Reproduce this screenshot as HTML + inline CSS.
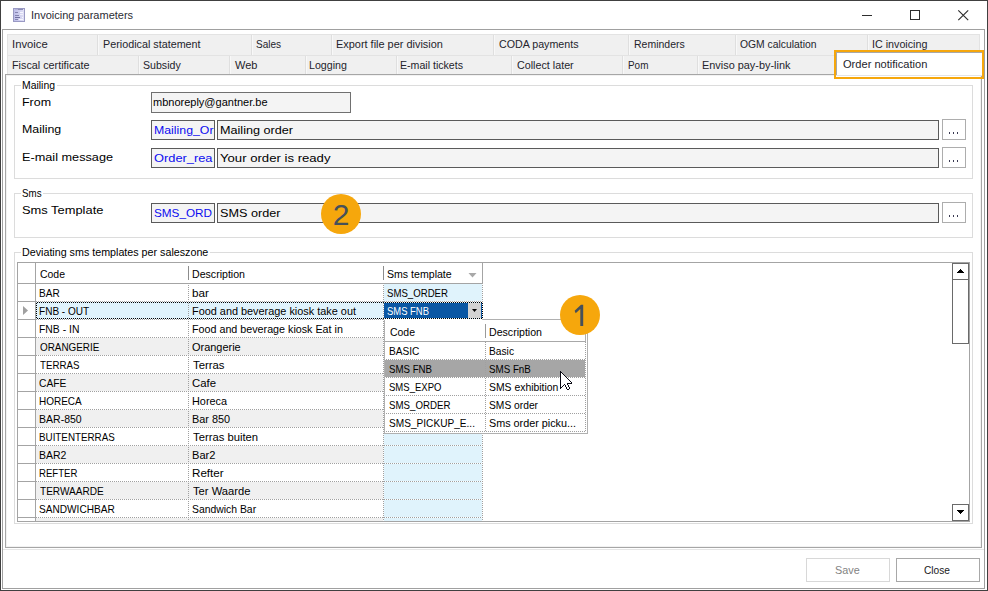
<!DOCTYPE html><html><head><meta charset="utf-8"><title>Invoicing parameters</title><style>html,body{margin:0;padding:0}body{width:988px;height:591px;position:relative;overflow:hidden;background:#fff;font-family:"Liberation Sans", sans-serif;}
div,svg,span{position:absolute;box-sizing:border-box}
span{white-space:pre;line-height:1;transform-origin:0 0}
</style></head><body>
<div style="left:0px;top:0px;width:988px;height:591px;border:1px solid #404040;"></div>
<svg style="left:13px;top:8px" width="12" height="14" viewBox="0 0 12 14"><defs><linearGradient id="ig" x1="0" x2="1" y1="0" y2="0"><stop offset="0" stop-color="#bcbce8"/><stop offset="1" stop-color="#e2e2f6"/></linearGradient></defs><rect x="0.5" y="0.5" width="11" height="13" fill="url(#ig)" stroke="#9a9ac4"/><rect x="5" y="1" width="5" height="1" fill="#8c8cb4"/><rect x="2" y="1" width="3" height="1" fill="#b4b4d8"/><rect x="2" y="4" width="3" height="1" fill="#8484b0"/><rect x="2" y="7" width="4" height="1" fill="#8484b0"/><rect x="2" y="9" width="5" height="1" fill="#7070a0"/><rect x="2" y="11" width="3" height="1" fill="#8484b0"/><rect x="7" y="4" width="3" height="1" fill="#f6f6ff"/><rect x="7" y="6" width="3" height="1" fill="#f0f0fc"/><rect x="9" y="9" width="1" height="1" fill="#f6f6ff"/><rect x="6" y="11" width="4" height="1" fill="#f6f6ff"/></svg>
<svg style="left:855px;top:5px" width="120" height="20" viewBox="0 0 120 20" fill="none" stroke="#2e2e2e" stroke-width="1"><path d="M7 10.5H17"/><rect x="55.5" y="5.5" width="9" height="9"/><path d="M103.3 5.3L113.2 15.2M113.2 5.3L103.3 15.2" stroke-width="1.15"/></svg>
<div style="left:2px;top:29px;width:983px;height:560px;border:1px solid #a0a0a0;"></div>
<div style="left:7px;top:34px;width:973px;height:21px;background:#f0f0f0;"></div>
<div style="left:7px;top:55px;width:829px;height:19px;background:#f0f0f0;"></div>
<div style="left:7px;top:34px;width:973px;height:1px;background:#e3e3e3;"></div>
<div style="left:7px;top:55px;width:973px;height:1px;background:#e3e3e3;"></div>
<div style="left:7px;top:34px;width:1px;height:40px;background:#e3e3e3;"></div>
<div style="left:979px;top:34px;width:1px;height:21px;background:#e3e3e3;"></div>
<div style="left:97px;top:35px;width:1px;height:20px;background:#dfdfdf;"></div>
<div style="left:98px;top:35px;width:1px;height:20px;background:#f8f8f8;"></div>
<div style="left:251px;top:35px;width:1px;height:20px;background:#dfdfdf;"></div>
<div style="left:252px;top:35px;width:1px;height:20px;background:#f8f8f8;"></div>
<div style="left:331px;top:35px;width:1px;height:20px;background:#dfdfdf;"></div>
<div style="left:332px;top:35px;width:1px;height:20px;background:#f8f8f8;"></div>
<div style="left:493px;top:35px;width:1px;height:20px;background:#dfdfdf;"></div>
<div style="left:494px;top:35px;width:1px;height:20px;background:#f8f8f8;"></div>
<div style="left:628px;top:35px;width:1px;height:20px;background:#dfdfdf;"></div>
<div style="left:629px;top:35px;width:1px;height:20px;background:#f8f8f8;"></div>
<div style="left:735px;top:35px;width:1px;height:20px;background:#dfdfdf;"></div>
<div style="left:736px;top:35px;width:1px;height:20px;background:#f8f8f8;"></div>
<div style="left:867px;top:35px;width:1px;height:20px;background:#dfdfdf;"></div>
<div style="left:868px;top:35px;width:1px;height:20px;background:#f8f8f8;"></div>
<div style="left:138px;top:56px;width:1px;height:18px;background:#dfdfdf;"></div>
<div style="left:139px;top:56px;width:1px;height:18px;background:#f8f8f8;"></div>
<div style="left:229px;top:56px;width:1px;height:18px;background:#dfdfdf;"></div>
<div style="left:230px;top:56px;width:1px;height:18px;background:#f8f8f8;"></div>
<div style="left:305px;top:56px;width:1px;height:18px;background:#dfdfdf;"></div>
<div style="left:306px;top:56px;width:1px;height:18px;background:#f8f8f8;"></div>
<div style="left:396px;top:56px;width:1px;height:18px;background:#dfdfdf;"></div>
<div style="left:397px;top:56px;width:1px;height:18px;background:#f8f8f8;"></div>
<div style="left:511px;top:56px;width:1px;height:18px;background:#dfdfdf;"></div>
<div style="left:512px;top:56px;width:1px;height:18px;background:#f8f8f8;"></div>
<div style="left:622px;top:56px;width:1px;height:18px;background:#dfdfdf;"></div>
<div style="left:623px;top:56px;width:1px;height:18px;background:#f8f8f8;"></div>
<div style="left:697px;top:56px;width:1px;height:18px;background:#dfdfdf;"></div>
<div style="left:698px;top:56px;width:1px;height:18px;background:#f8f8f8;"></div>
<div style="left:5px;top:74px;width:977px;height:474px;background:#fff;border:1px solid #a6a6a6;"></div>
<div style="left:6px;top:75px;width:975px;height:472px;border:1px solid #f2f2f2;"></div>
<div style="left:3px;top:549px;width:981px;height:1px;background:#e6e6e6;"></div>
<div style="left:836px;top:52px;width:146px;height:24px;background:#fff;border-left:1px solid #a8a8a8;border-top:1px solid #a8a8a8;box-sizing:border-box;"></div>
<div style="left:836px;top:75px;width:146px;height:1px;background:#e4e4e4;"></div>
<div style="left:834px;top:50px;width:150px;height:29px;border:2px solid #f6a70c;"></div>
<div style="left:14px;top:85px;width:959px;height:94px;border:1px solid #dcdcdc;"></div>
<div style="left:21px;top:85px;width:36px;height:1px;background:#fff;"></div>
<div style="left:14px;top:193px;width:959px;height:45px;border:1px solid #dcdcdc;"></div>
<div style="left:21px;top:193px;width:22px;height:1px;background:#fff;"></div>
<div style="left:14px;top:252px;width:959px;height:272px;border:1px solid #dcdcdc;"></div>
<div style="left:21px;top:252px;width:189px;height:1px;background:#fff;"></div>
<div style="left:151px;top:92px;width:200px;height:21px;background:#f4f4f4;border:1px solid #707070;"></div>
<div style="left:151px;top:120px;width:64px;height:20px;background:#f4f4f4;border:1px solid #5a5a5a;"></div>
<div style="left:217px;top:120px;width:722px;height:20px;background:#f4f4f4;border:1px solid #5a5a5a;"></div>
<div style="left:942px;top:119px;width:24px;height:21px;background:#fff;border:1px solid #adadad;"></div>
<div style="left:949px;top:132px;width:1px;height:2px;background:#3a3a52;"></div>
<div style="left:953px;top:132px;width:1px;height:2px;background:#3a3a52;"></div>
<div style="left:957px;top:132px;width:1px;height:2px;background:#3a3a52;"></div>
<div style="left:151px;top:148px;width:64px;height:20px;background:#f4f4f4;border:1px solid #5a5a5a;"></div>
<div style="left:217px;top:148px;width:722px;height:20px;background:#f4f4f4;border:1px solid #5a5a5a;"></div>
<div style="left:942px;top:147px;width:24px;height:21px;background:#fff;border:1px solid #adadad;"></div>
<div style="left:949px;top:160px;width:1px;height:2px;background:#3a3a52;"></div>
<div style="left:953px;top:160px;width:1px;height:2px;background:#3a3a52;"></div>
<div style="left:957px;top:160px;width:1px;height:2px;background:#3a3a52;"></div>
<div style="left:151px;top:203px;width:64px;height:20px;background:#f4f4f4;border:1px solid #5a5a5a;"></div>
<div style="left:217px;top:203px;width:722px;height:20px;background:#f4f4f4;border:1px solid #5a5a5a;"></div>
<div style="left:942px;top:202px;width:24px;height:21px;background:#fff;border:1px solid #adadad;"></div>
<div style="left:949px;top:215px;width:1px;height:2px;background:#3a3a52;"></div>
<div style="left:953px;top:215px;width:1px;height:2px;background:#3a3a52;"></div>
<div style="left:957px;top:215px;width:1px;height:2px;background:#3a3a52;"></div>
<div style="left:17px;top:262px;width:953px;height:260px;background:#fff;border:1px solid #a4a4a4;"></div>
<div style="left:18px;top:283px;width:465px;height:1px;background:#a4a4a4;"></div>
<div style="left:35px;top:263px;width:1px;height:259px;background:#a4a4a4;"></div>
<div style="left:482px;top:263px;width:1px;height:21px;background:#a4a4a4;"></div>
<div style="left:188px;top:266px;width:1px;height:14px;background:#8c8c8c;"></div>
<div style="left:383px;top:266px;width:1px;height:14px;background:#8c8c8c;"></div>
<svg style="left:468px;top:272px" width="9" height="6" viewBox="0 0 9 6"><path d="M0.5 1H8.5L4.5 5.5Z" fill="#a8a8a8"/></svg>
<div style="left:384px;top:284px;width:98px;height:17px;background:#e0f3fc;"></div>
<div style="left:18px;top:301px;width:17px;height:1px;background:#a4a4a4;"></div>
<div style="left:36px;top:301px;width:447px;height:1px;background:repeating-linear-gradient(90deg,#a0a0a0 0 1px,transparent 1px 2px);"></div>
<div style="left:36px;top:302px;width:347px;height:17px;background:#e0f3fc;"></div>
<div style="left:384px;top:302px;width:98px;height:17px;background:#e0f3fc;"></div>
<div style="left:18px;top:319px;width:17px;height:1px;background:#a4a4a4;"></div>
<div style="left:36px;top:319px;width:447px;height:1px;background:repeating-linear-gradient(90deg,#a0a0a0 0 1px,transparent 1px 2px);"></div>
<div style="left:384px;top:320px;width:98px;height:17px;background:#e0f3fc;"></div>
<div style="left:18px;top:337px;width:17px;height:1px;background:#a4a4a4;"></div>
<div style="left:36px;top:337px;width:447px;height:1px;background:repeating-linear-gradient(90deg,#a0a0a0 0 1px,transparent 1px 2px);"></div>
<div style="left:36px;top:338px;width:347px;height:17px;background:#f0f0f0;"></div>
<div style="left:384px;top:338px;width:98px;height:17px;background:#e0f3fc;"></div>
<div style="left:18px;top:355px;width:17px;height:1px;background:#a4a4a4;"></div>
<div style="left:36px;top:355px;width:447px;height:1px;background:repeating-linear-gradient(90deg,#a0a0a0 0 1px,transparent 1px 2px);"></div>
<div style="left:384px;top:356px;width:98px;height:17px;background:#e0f3fc;"></div>
<div style="left:18px;top:373px;width:17px;height:1px;background:#a4a4a4;"></div>
<div style="left:36px;top:373px;width:447px;height:1px;background:repeating-linear-gradient(90deg,#a0a0a0 0 1px,transparent 1px 2px);"></div>
<div style="left:36px;top:374px;width:347px;height:17px;background:#f0f0f0;"></div>
<div style="left:384px;top:374px;width:98px;height:17px;background:#e0f3fc;"></div>
<div style="left:18px;top:391px;width:17px;height:1px;background:#a4a4a4;"></div>
<div style="left:36px;top:391px;width:447px;height:1px;background:repeating-linear-gradient(90deg,#a0a0a0 0 1px,transparent 1px 2px);"></div>
<div style="left:384px;top:392px;width:98px;height:17px;background:#e0f3fc;"></div>
<div style="left:18px;top:409px;width:17px;height:1px;background:#a4a4a4;"></div>
<div style="left:36px;top:409px;width:447px;height:1px;background:repeating-linear-gradient(90deg,#a0a0a0 0 1px,transparent 1px 2px);"></div>
<div style="left:36px;top:410px;width:347px;height:17px;background:#f0f0f0;"></div>
<div style="left:384px;top:410px;width:98px;height:17px;background:#e0f3fc;"></div>
<div style="left:18px;top:427px;width:17px;height:1px;background:#a4a4a4;"></div>
<div style="left:36px;top:427px;width:447px;height:1px;background:repeating-linear-gradient(90deg,#a0a0a0 0 1px,transparent 1px 2px);"></div>
<div style="left:384px;top:428px;width:98px;height:17px;background:#e0f3fc;"></div>
<div style="left:18px;top:445px;width:17px;height:1px;background:#a4a4a4;"></div>
<div style="left:36px;top:445px;width:447px;height:1px;background:repeating-linear-gradient(90deg,#a0a0a0 0 1px,transparent 1px 2px);"></div>
<div style="left:36px;top:446px;width:347px;height:17px;background:#f0f0f0;"></div>
<div style="left:384px;top:446px;width:98px;height:17px;background:#e0f3fc;"></div>
<div style="left:18px;top:463px;width:17px;height:1px;background:#a4a4a4;"></div>
<div style="left:36px;top:463px;width:447px;height:1px;background:repeating-linear-gradient(90deg,#a0a0a0 0 1px,transparent 1px 2px);"></div>
<div style="left:384px;top:464px;width:98px;height:17px;background:#e0f3fc;"></div>
<div style="left:18px;top:481px;width:17px;height:1px;background:#a4a4a4;"></div>
<div style="left:36px;top:481px;width:447px;height:1px;background:repeating-linear-gradient(90deg,#a0a0a0 0 1px,transparent 1px 2px);"></div>
<div style="left:36px;top:482px;width:347px;height:17px;background:#f0f0f0;"></div>
<div style="left:384px;top:482px;width:98px;height:17px;background:#e0f3fc;"></div>
<div style="left:18px;top:499px;width:17px;height:1px;background:#a4a4a4;"></div>
<div style="left:36px;top:499px;width:447px;height:1px;background:repeating-linear-gradient(90deg,#a0a0a0 0 1px,transparent 1px 2px);"></div>
<div style="left:384px;top:500px;width:98px;height:17px;background:#e0f3fc;"></div>
<div style="left:18px;top:517px;width:17px;height:1px;background:#a4a4a4;"></div>
<div style="left:36px;top:517px;width:447px;height:1px;background:repeating-linear-gradient(90deg,#a0a0a0 0 1px,transparent 1px 2px);"></div>
<div style="left:36px;top:518px;width:347px;height:3px;background:#f0f0f0;"></div>
<div style="left:384px;top:518px;width:98px;height:3px;background:#e0f3fc;"></div>
<div style="left:188px;top:285px;width:1px;height:236px;background:repeating-linear-gradient(180deg,#a0a0a0 0 1px,transparent 1px 2px);"></div>
<div style="left:383px;top:285px;width:1px;height:236px;background:repeating-linear-gradient(180deg,#a0a0a0 0 1px,transparent 1px 2px);"></div>
<div style="left:482px;top:285px;width:1px;height:236px;background:repeating-linear-gradient(180deg,#a0a0a0 0 1px,transparent 1px 2px);"></div>
<div style="left:37px;top:302px;width:446px;height:1px;background:repeating-linear-gradient(90deg,#000 0 1px,transparent 1px 2px);"></div>
<div style="left:37px;top:318px;width:446px;height:1px;background:repeating-linear-gradient(90deg,#000 0 1px,transparent 1px 2px);"></div>
<div style="left:36px;top:303px;width:1px;height:15px;background:repeating-linear-gradient(180deg,#000 0 1px,transparent 1px 2px);"></div>
<div style="left:482px;top:303px;width:1px;height:15px;background:#fff;"></div>
<div style="left:482px;top:303px;width:1px;height:15px;background:repeating-linear-gradient(180deg,#000 0 1px,transparent 1px 2px);"></div>
<div style="left:384px;top:319px;width:98px;height:1px;background:#fff;"></div>
<svg style="left:23px;top:306px" width="5" height="9" viewBox="0 0 5 9"><path d="M0 0L5 4.5L0 9Z" fill="#a0a0a0"/></svg>
<div style="left:384px;top:303px;width:98px;height:15px;background:#0a57a4;"></div>
<div style="left:468px;top:303px;width:13px;height:15px;background:#d3d3d3;"></div>
<svg style="left:472px;top:309px" width="5" height="3" viewBox="0 0 5 3"><path d="M0 0H5L2.5 3Z" fill="#000"/></svg>
<div style="left:952px;top:263px;width:17px;height:17px;background:#fff;border:1px solid #6a6a6a;"></div>
<div style="left:952px;top:279px;width:17px;height:65px;background:#fff;border:1px solid #6a6a6a;"></div>
<div style="left:960px;top:269px;width:1px;height:1px;background:#000;"></div>
<div style="left:959px;top:270px;width:3px;height:1px;background:#000;"></div>
<div style="left:958px;top:271px;width:5px;height:1px;background:#000;"></div>
<div style="left:957px;top:272px;width:7px;height:1px;background:#000;"></div>
<div style="left:952px;top:504px;width:17px;height:17px;background:#fff;border:1px solid #6a6a6a;"></div>
<div style="left:957px;top:510px;width:7px;height:1px;background:#000;"></div>
<div style="left:958px;top:511px;width:5px;height:1px;background:#000;"></div>
<div style="left:959px;top:512px;width:3px;height:1px;background:#000;"></div>
<div style="left:960px;top:513px;width:1px;height:1px;background:#000;"></div>
<div style="left:384px;top:319px;width:204px;height:115px;background:#fff;border:1px solid #b0b0b0;"></div>
<div style="left:384px;top:319px;width:98px;height:1px;background:#fff;"></div>
<div style="left:385px;top:341px;width:200px;height:1px;background:#a8a8a8;"></div>
<div style="left:485px;top:324px;width:1px;height:14px;background:#9a9a9a;"></div>
<div style="left:585px;top:320px;width:1px;height:22px;background:#b0b0b0;"></div>
<div style="left:385px;top:359px;width:201px;height:1px;background:repeating-linear-gradient(90deg,#fff 0 1px,#a0a0a0 1px 2px);"></div>
<div style="left:385px;top:360px;width:200px;height:17px;background:#a6a6a6;"></div>
<div style="left:385px;top:377px;width:201px;height:1px;background:repeating-linear-gradient(90deg,#fff 0 1px,#a0a0a0 1px 2px);"></div>
<div style="left:385px;top:395px;width:201px;height:1px;background:repeating-linear-gradient(90deg,#fff 0 1px,#a0a0a0 1px 2px);"></div>
<div style="left:385px;top:413px;width:201px;height:1px;background:repeating-linear-gradient(90deg,#fff 0 1px,#a0a0a0 1px 2px);"></div>
<div style="left:385px;top:431px;width:201px;height:1px;background:repeating-linear-gradient(90deg,#fff 0 1px,#a0a0a0 1px 2px);"></div>
<div style="left:485px;top:342px;width:1px;height:90px;background:repeating-linear-gradient(180deg,#a0a0a0 0 1px,transparent 1px 2px);"></div>
<div style="left:585px;top:342px;width:1px;height:90px;background:repeating-linear-gradient(180deg,#a0a0a0 0 1px,transparent 1px 2px);"></div>
<div style="left:806px;top:558px;width:84px;height:24px;background:#fff;border:1px solid #d8d8d8;"></div>
<div style="left:896px;top:558px;width:84px;height:24px;background:#fff;border:1px solid #a8a8a8;"></div>
<div style="left:321px;top:194px;width:40px;height:40px;border-radius:50%;background:#f6a70c"></div>
<div style="left:560px;top:295px;width:40px;height:40px;border-radius:50%;background:#f6a70c"></div>
<svg style="left:560px;top:295px" width="40" height="40" viewBox="560 295 40 40"><path d="M583.2 304.8V326H580.3V308.9L575.7 313.2L574.6 310.7L581 304.8Z" fill="#46505a"/></svg>
<svg style="left:560px;top:371px" width="12" height="19" viewBox="0 0 12 19" shape-rendering="crispEdges"><rect x="0" y="0" width="1" height="1" fill="#0a0a14"/><rect x="0" y="1" width="2" height="1" fill="#0a0a14"/><rect x="0" y="2" width="1" height="1" fill="#0a0a14"/><rect x="1" y="2" width="1" height="1" fill="#fff"/><rect x="2" y="2" width="1" height="1" fill="#0a0a14"/><rect x="0" y="3" width="1" height="1" fill="#0a0a14"/><rect x="1" y="3" width="2" height="1" fill="#fff"/><rect x="3" y="3" width="1" height="1" fill="#0a0a14"/><rect x="0" y="4" width="1" height="1" fill="#0a0a14"/><rect x="1" y="4" width="3" height="1" fill="#fff"/><rect x="4" y="4" width="1" height="1" fill="#0a0a14"/><rect x="0" y="5" width="1" height="1" fill="#0a0a14"/><rect x="1" y="5" width="4" height="1" fill="#fff"/><rect x="5" y="5" width="1" height="1" fill="#0a0a14"/><rect x="0" y="6" width="1" height="1" fill="#0a0a14"/><rect x="1" y="6" width="5" height="1" fill="#fff"/><rect x="6" y="6" width="1" height="1" fill="#0a0a14"/><rect x="0" y="7" width="1" height="1" fill="#0a0a14"/><rect x="1" y="7" width="6" height="1" fill="#fff"/><rect x="7" y="7" width="1" height="1" fill="#0a0a14"/><rect x="0" y="8" width="1" height="1" fill="#0a0a14"/><rect x="1" y="8" width="7" height="1" fill="#fff"/><rect x="8" y="8" width="1" height="1" fill="#0a0a14"/><rect x="0" y="9" width="1" height="1" fill="#0a0a14"/><rect x="1" y="9" width="8" height="1" fill="#fff"/><rect x="9" y="9" width="1" height="1" fill="#0a0a14"/><rect x="0" y="10" width="1" height="1" fill="#0a0a14"/><rect x="1" y="10" width="9" height="1" fill="#fff"/><rect x="10" y="10" width="1" height="1" fill="#0a0a14"/><rect x="0" y="11" width="1" height="1" fill="#0a0a14"/><rect x="1" y="11" width="10" height="1" fill="#fff"/><rect x="11" y="11" width="1" height="1" fill="#0a0a14"/><rect x="0" y="12" width="1" height="1" fill="#0a0a14"/><rect x="1" y="12" width="6" height="1" fill="#fff"/><rect x="7" y="12" width="5" height="1" fill="#0a0a14"/><rect x="0" y="13" width="1" height="1" fill="#0a0a14"/><rect x="1" y="13" width="3" height="1" fill="#fff"/><rect x="4" y="13" width="1" height="1" fill="#0a0a14"/><rect x="5" y="13" width="2" height="1" fill="#fff"/><rect x="7" y="13" width="1" height="1" fill="#0a0a14"/><rect x="0" y="14" width="1" height="1" fill="#0a0a14"/><rect x="1" y="14" width="2" height="1" fill="#fff"/><rect x="3" y="14" width="1" height="1" fill="#0a0a14"/><rect x="5" y="14" width="1" height="1" fill="#0a0a14"/><rect x="6" y="14" width="2" height="1" fill="#fff"/><rect x="8" y="14" width="1" height="1" fill="#0a0a14"/><rect x="0" y="15" width="1" height="1" fill="#0a0a14"/><rect x="1" y="15" width="1" height="1" fill="#fff"/><rect x="2" y="15" width="1" height="1" fill="#0a0a14"/><rect x="5" y="15" width="1" height="1" fill="#0a0a14"/><rect x="6" y="15" width="2" height="1" fill="#fff"/><rect x="8" y="15" width="1" height="1" fill="#0a0a14"/><rect x="0" y="16" width="2" height="1" fill="#0a0a14"/><rect x="6" y="16" width="1" height="1" fill="#0a0a14"/><rect x="7" y="16" width="2" height="1" fill="#fff"/><rect x="9" y="16" width="1" height="1" fill="#0a0a14"/><rect x="0" y="17" width="1" height="1" fill="#0a0a14"/><rect x="6" y="17" width="1" height="1" fill="#0a0a14"/><rect x="7" y="17" width="2" height="1" fill="#fff"/><rect x="9" y="17" width="1" height="1" fill="#0a0a14"/><rect x="7" y="18" width="2" height="1" fill="#0a0a14"/></svg>
<span style="left:31px;top:10px;font-size:11px;color:#2c2c34;">Invoicing parameters</span>
<span style="left:12px;top:39px;font-size:11px;color:#24242c;transform:scaleX(1.0241);">Invoice</span>
<span style="left:103px;top:39px;font-size:11px;color:#24242c;transform:scaleX(0.9792);">Periodical statement</span>
<span style="left:256px;top:39px;font-size:11px;color:#24242c;transform:scaleX(0.9117);">Sales</span>
<span style="left:336px;top:39px;font-size:11px;color:#24242c;transform:scaleX(0.9934);">Export file per division</span>
<span style="left:499px;top:39px;font-size:11px;color:#24242c;transform:scaleX(0.9704);">CODA payments</span>
<span style="left:634px;top:39px;font-size:11px;color:#24242c;transform:scaleX(0.9532);">Reminders</span>
<span style="left:740px;top:39px;font-size:11px;color:#24242c;transform:scaleX(0.9408);">OGM calculation</span>
<span style="left:872px;top:39px;font-size:11px;color:#24242c;transform:scaleX(0.9743);">IC invoicing</span>
<span style="left:12px;top:60px;font-size:11px;color:#24242c;transform:scaleX(0.9815);">Fiscal certificate</span>
<span style="left:143px;top:60px;font-size:11px;color:#24242c;transform:scaleX(0.9632);">Subsidy</span>
<span style="left:235px;top:60px;font-size:11px;color:#24242c;">Web</span>
<span style="left:309px;top:60px;font-size:11px;color:#24242c;transform:scaleX(0.9679);">Logging</span>
<span style="left:400px;top:60px;font-size:11px;color:#24242c;transform:scaleX(0.9632);">E-mail tickets</span>
<span style="left:517px;top:60px;font-size:11px;color:#24242c;transform:scaleX(0.9763);">Collect later</span>
<span style="left:628px;top:60px;font-size:11px;color:#24242c;transform:scaleX(0.9017);">Pom</span>
<span style="left:702px;top:60px;font-size:11px;color:#24242c;transform:scaleX(0.9903);">Enviso pay-by-link</span>
<span style="left:843px;top:59px;font-size:11px;color:#24242c;transform:scaleX(1.0076);">Order notification</span>
<span style="left:22px;top:80px;font-size:11px;color:#000;transform:scaleX(0.9467);">Mailing</span>
<span style="left:22px;top:188px;font-size:11px;color:#000;transform:scaleX(0.8864);">Sms</span>
<span style="left:22px;top:247px;font-size:11px;color:#000;transform:scaleX(0.9735);">Deviating sms templates per saleszone</span>
<span style="left:22px;top:97px;font-size:11px;color:#000;transform:scaleX(1.1296);">From</span>
<span style="left:153px;top:97px;font-size:11px;color:#000;">mbnoreply@gantner.be</span>
<span style="left:22px;top:124px;font-size:11px;color:#000;transform:scaleX(1.1245);">Mailing</span>
<span style="left:154px;top:125px;font-size:11px;color:#0c0cf0;transform:scaleX(1.1187);">Mailing_Or</span>
<span style="left:220px;top:125px;font-size:11px;color:#000;transform:scaleX(1.1479);">Mailing order</span>
<span style="left:22px;top:152px;font-size:11px;color:#000;transform:scaleX(1.1540);">E-mail message</span>
<span style="left:154px;top:153px;font-size:11px;color:#0c0cf0;transform:scaleX(1.1667);">Order_rea</span>
<span style="left:220px;top:153px;font-size:11px;color:#000;transform:scaleX(1.1940);">Your order is ready</span>
<span style="left:22px;top:205px;font-size:11px;color:#000;transform:scaleX(1.1712);">Sms Template</span>
<span style="left:154px;top:208px;font-size:11px;color:#0c0cf0;transform:scaleX(1.0661);">SMS_ORD</span>
<span style="left:220px;top:208px;font-size:11px;color:#000;transform:scaleX(1.1507);">SMS order</span>
<span style="left:40px;top:269px;font-size:11px;color:#000;transform:scaleX(0.9507);">Code</span>
<span style="left:192px;top:269px;font-size:11px;color:#000;transform:scaleX(0.9631);">Description</span>
<span style="left:387px;top:269px;font-size:11px;color:#000;transform:scaleX(0.9621);">Sms template</span>
<span style="left:39px;top:288px;font-size:11px;color:#000;transform:scaleX(0.9149);">BAR</span>
<span style="left:192px;top:288px;font-size:11px;color:#000;transform:scaleX(1.0625);">bar</span>
<span style="left:39px;top:306px;font-size:11px;color:#000;transform:scaleX(0.9127);">FNB - OUT</span>
<span style="left:192px;top:306px;font-size:11px;color:#000;transform:scaleX(0.9895);">Food and beverage kiosk take out</span>
<span style="left:39px;top:324px;font-size:11px;color:#000;transform:scaleX(0.9443);">FNB - IN</span>
<span style="left:192px;top:324px;font-size:11px;color:#000;transform:scaleX(0.9753);">Food and beverage kiosk Eat in</span>
<span style="left:40px;top:342px;font-size:11px;color:#000;transform:scaleX(0.8983);">ORANGERIE</span>
<span style="left:192px;top:342px;font-size:11px;color:#000;transform:scaleX(0.9955);">Orangerie</span>
<span style="left:40px;top:360px;font-size:11px;color:#000;transform:scaleX(0.8829);">TERRAS</span>
<span style="left:193px;top:360px;font-size:11px;color:#000;transform:scaleX(1.0307);">Terras</span>
<span style="left:39px;top:378px;font-size:11px;color:#000;transform:scaleX(0.9338);">CAFE</span>
<span style="left:192px;top:378px;font-size:11px;color:#000;transform:scaleX(1.0323);">Cafe</span>
<span style="left:39px;top:396px;font-size:11px;color:#000;transform:scaleX(0.9073);">HORECA</span>
<span style="left:192px;top:396px;font-size:11px;color:#000;transform:scaleX(0.9868);">Horeca</span>
<span style="left:39px;top:414px;font-size:11px;color:#000;transform:scaleX(0.9565);">BAR-850</span>
<span style="left:192px;top:414px;font-size:11px;color:#000;transform:scaleX(0.9888);">Bar 850</span>
<span style="left:39px;top:432px;font-size:11px;color:#000;transform:scaleX(0.8921);">BUITENTERRAS</span>
<span style="left:193px;top:432px;font-size:11px;color:#000;transform:scaleX(1.0237);">Terras buiten</span>
<span style="left:39px;top:450px;font-size:11px;color:#000;transform:scaleX(0.9530);">BAR2</span>
<span style="left:192px;top:450px;font-size:11px;color:#000;transform:scaleX(1.0065);">Bar2</span>
<span style="left:39px;top:468px;font-size:11px;color:#000;transform:scaleX(0.8727);">REFTER</span>
<span style="left:192px;top:468px;font-size:11px;color:#000;transform:scaleX(1.0578);">Refter</span>
<span style="left:40px;top:486px;font-size:11px;color:#000;transform:scaleX(0.9155);">TERWAARDE</span>
<span style="left:193px;top:486px;font-size:11px;color:#000;transform:scaleX(1.0168);">Ter Waarde</span>
<span style="left:39px;top:504px;font-size:11px;color:#000;transform:scaleX(0.9186);">SANDWICHBAR</span>
<span style="left:192px;top:504px;font-size:11px;color:#000;transform:scaleX(0.9444);">Sandwich Bar</span>
<span style="left:387px;top:288px;font-size:11px;color:#000;transform:scaleX(0.8753);">SMS_ORDER</span>
<span style="left:387px;top:306px;font-size:11px;color:#fff;transform:scaleX(0.8588);">SMS FNB</span>
<span style="left:390px;top:327px;font-size:11px;color:#000;transform:scaleX(0.9507);">Code</span>
<span style="left:489px;top:327px;font-size:11px;color:#000;transform:scaleX(0.9631);">Description</span>
<span style="left:389px;top:346px;font-size:11px;color:#000;transform:scaleX(0.9208);">BASIC</span>
<span style="left:489px;top:346px;font-size:11px;color:#000;transform:scaleX(0.9292);">Basic</span>
<span style="left:389px;top:364px;font-size:11px;color:#000;transform:scaleX(0.8792);">SMS FNB</span>
<span style="left:489px;top:364px;font-size:11px;color:#000;transform:scaleX(0.8879);">SMS FnB</span>
<span style="left:389px;top:382px;font-size:11px;color:#000;transform:scaleX(0.8657);">SMS_EXPO</span>
<span style="left:489px;top:382px;font-size:11px;color:#000;transform:scaleX(0.9458);">SMS exhibition</span>
<span style="left:389px;top:400px;font-size:11px;color:#000;transform:scaleX(0.8811);">SMS_ORDER</span>
<span style="left:489px;top:400px;font-size:11px;color:#000;transform:scaleX(0.9319);">SMS order</span>
<span style="left:389px;top:418px;font-size:11px;color:#000;transform:scaleX(0.9193);">SMS_PICKUP_E...</span>
<span style="left:489px;top:418px;font-size:11px;color:#000;transform:scaleX(0.9815);">Sms order picku...</span>
<span style="left:835px;top:565px;font-size:11px;color:#838383;transform:scaleX(0.9849);">Save</span>
<span style="left:924px;top:565px;font-size:11px;color:#1a1a1a;transform:scaleX(0.9244);">Close</span>
<span style="left:332.7px;top:199.3px;transform:translateY(0.3px) scaleY(1.012);font-size:30px;color:#46505a;">2</span>
</body></html>
